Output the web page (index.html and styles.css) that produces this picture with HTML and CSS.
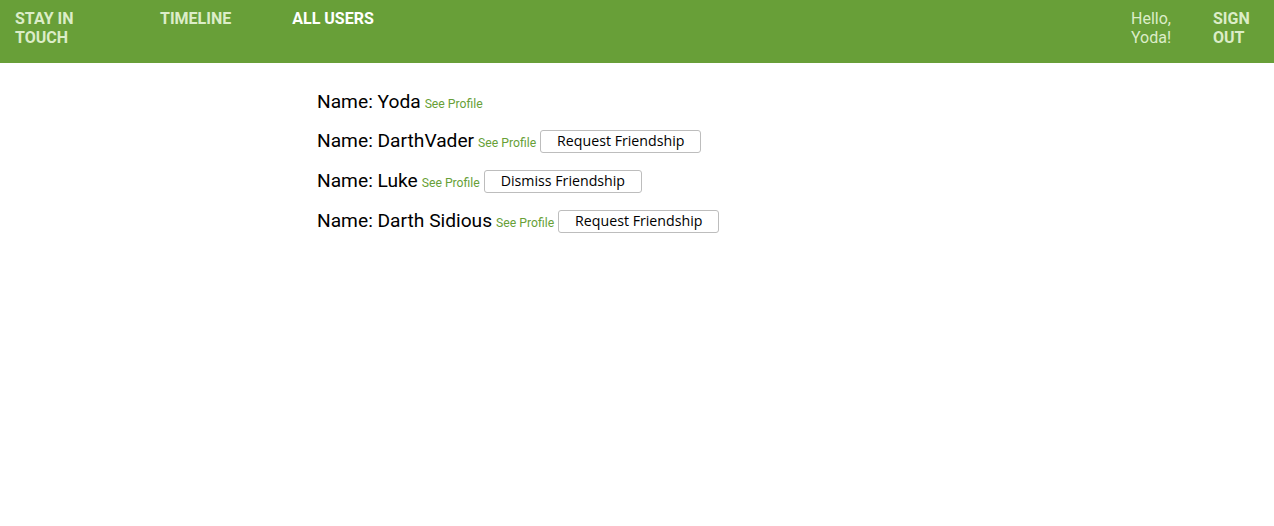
FILE: index.html
```html
<!DOCTYPE html>
<html>
<head>
<meta charset="utf-8">
<link rel="stylesheet" href="styles.css">
</head>
<body>
<nav class="nav">
  <a class="nav-item brand">STAY IN TOUCH</a>
  <a class="nav-item timeline">TIMELINE</a>
  <a class="nav-item active">ALL USERS</a>
  <div class="spacer"></div>
  <span class="nav-hello">Hello, Yoda!</span>
  <a class="nav-item signout">SIGN OUT</a>
</nav>
<main class="content">
  <div class="user-row first"><span class="name">Name: Yoda</span> <a class="profile">See Profile</a></div>
  <div class="user-row"><span class="name">Name: DarthVader</span> <a class="profile">See Profile</a> <button class="btn">Request Friendship</button></div>
  <div class="user-row"><span class="name">Name: Luke</span> <a class="profile">See Profile</a> <button class="btn">Dismiss Friendship</button></div>
  <div class="user-row"><span class="name">Name: Darth Sidious</span> <a class="profile">See Profile</a> <button class="btn">Request Friendship</button></div>
</main>
</body>
</html>
```

FILE: styles.css
```css
* { box-sizing: border-box; }
body {
  margin: 0;
  font-family: Roboto, "Liberation Sans", sans-serif;
  background: #fff;
}
.nav {
  display: flex;
  align-items: flex-start;
  height: 63px;
  background: #689f38;
  padding: 9px 21px 0 15px;
}
.nav-item {
  font-weight: 700;
  font-size: 16px;
  line-height: 19px;
  color: #dcedc8;
  text-decoration: none;
}
.brand { width: 80px; margin-right: 65px; }
.timeline { margin-right: 61px; }
.active { color: #ffffff; }
.spacer { flex: 1; }
.nav-hello {
  font-size: 16px;
  line-height: 19px;
  color: #dcedc8;
  width: 50px;
  margin-right: 32px;
}
.signout { width: 40px; }
.content {
  width: 640px;
  margin: 0 auto;
  padding-top: 27px;
}
.user-row {
  margin-bottom: 16px;
  line-height: 24px;
  height: 24px;
}
.user-row.first { margin-bottom: 15px; }
.name {
  font-size: 19.2px;
  color: #000;
}
.profile {
  font-size: 12.2px;
  color: #689f38;
  text-decoration: none;
}
.btn {
  font-family: "Open Sans", sans-serif;
  font-size: 14.2px;
  color: #000;
  background: #fff;
  border: 1px solid #bdbdbd;
  border-radius: 3px;
  height: 23px;
  padding: 0 16px;
  line-height: 20px;
  vertical-align: 1px;
}
```
